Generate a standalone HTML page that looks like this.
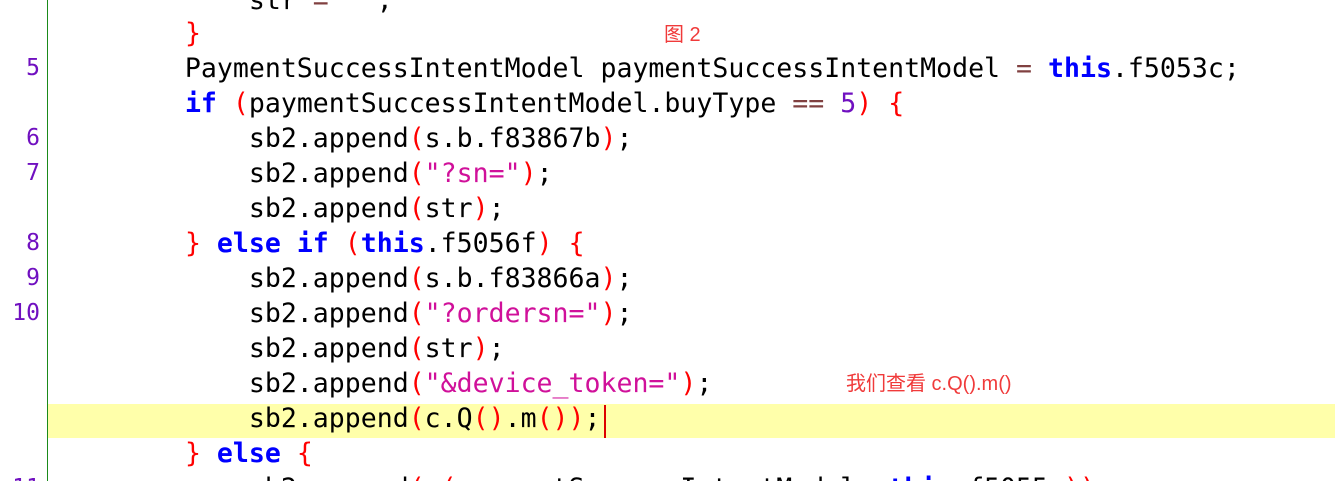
<!DOCTYPE html>
<html><head><meta charset="utf-8"><style>
html,body{margin:0;padding:0;background:#fff;width:1335px;height:481px;overflow:hidden;position:relative}
.g{position:absolute;left:47px;top:0;width:1px;height:481px;background:#1a8a1a}
.hl{position:absolute;left:48px;top:404px;width:1287px;height:34px;background:#ffffaa}
.l{position:absolute;left:121px;height:35px;line-height:35px;font-family:"DejaVu Sans Mono","Liberation Mono",monospace;font-size:26.55px;white-space:pre;color:#000}
.n{position:absolute;right:1295px;height:35px;line-height:35px;font-family:"DejaVu Sans Mono","Liberation Mono",monospace;font-size:23px;color:#7010c0}
.k{color:#0000ff;font-weight:bold}.b{color:#ff0000}.s{color:#d0109a}.o{color:#804040}.d{color:#7010c0}
.a{position:absolute;color:#f03a3a;font-family:"Liberation Sans","Noto Sans CJK SC",sans-serif;font-size:20px}
.cur{position:absolute;left:604px;top:405px;width:2px;height:33px;background:#d00}
</style></head><body>
<div class="hl"></div><div class="g"></div><div class="cur"></div>
<div class="l" style="top:-17px">        str <span class="o">=</span> <span class="s">""</span>;</div>
<div class="l" style="top:16px">    <span class="b">}</span></div>
<div class="n" style="top:51px">5</div>
<div class="l" style="top:51px">    PaymentSuccessIntentModel paymentSuccessIntentModel <span class="o">=</span> <span class="k">this</span>.f5053c;</div>
<div class="l" style="top:86px">    <span class="k">if</span> <span class="b">(</span>paymentSuccessIntentModel.buyType <span class="o">==</span> <span class="d">5</span><span class="b">)</span> <span class="b">{</span></div>
<div class="n" style="top:121px">6</div>
<div class="l" style="top:121px">        sb2.append<span class="b">(</span>s.b.f83867b<span class="b">)</span>;</div>
<div class="n" style="top:156px">7</div>
<div class="l" style="top:156px">        sb2.append<span class="b">(</span><span class="s">"?sn="</span><span class="b">)</span>;</div>
<div class="l" style="top:191px">        sb2.append<span class="b">(</span>str<span class="b">)</span>;</div>
<div class="n" style="top:226px">8</div>
<div class="l" style="top:226px">    <span class="b">}</span> <span class="k">else if</span> <span class="b">(</span><span class="k">this</span>.f5056f<span class="b">)</span> <span class="b">{</span></div>
<div class="n" style="top:261px">9</div>
<div class="l" style="top:261px">        sb2.append<span class="b">(</span>s.b.f83866a<span class="b">)</span>;</div>
<div class="n" style="top:296px">10</div>
<div class="l" style="top:296px">        sb2.append<span class="b">(</span><span class="s">"?ordersn="</span><span class="b">)</span>;</div>
<div class="l" style="top:331px">        sb2.append<span class="b">(</span>str<span class="b">)</span>;</div>
<div class="l" style="top:366px">        sb2.append<span class="b">(</span><span class="s">"&amp;device_token="</span><span class="b">)</span>;</div>
<div class="l" style="top:401px">        sb2.append<span class="b">(</span>c.Q<span class="b">()</span>.m<span class="b">())</span>;</div>
<div class="l" style="top:436px">    <span class="b">}</span> <span class="k">else</span> <span class="b">{</span></div>
<div class="n" style="top:471px;height:10px;overflow:hidden;line-height:35px">11</div>
<div class="l" style="top:471px;height:10px;overflow:hidden">        sb2.append<span class="b">(</span>a<span class="b">(</span>paymentSuccessIntentModel, <span class="k">this</span>.f5055c<span class="b">))</span>;</div>
<div class="a" style="left:664px;top:18px">图 2</div>
<div class="a" style="left:846px;top:367px">我们查看 c.Q().m()</div>
</body></html>
